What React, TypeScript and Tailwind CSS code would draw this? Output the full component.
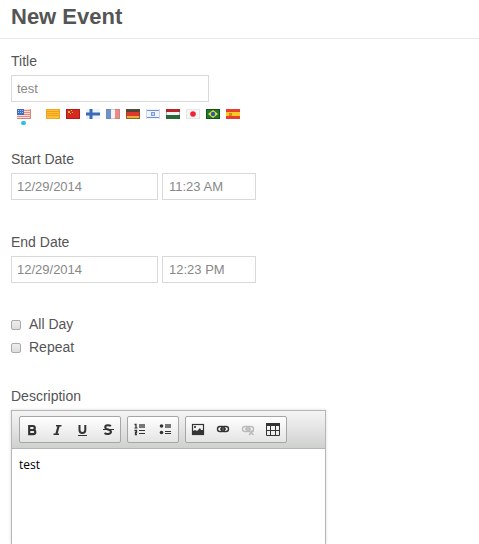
import { useState } from "react";
import type { ReactNode } from "react";

const languages: { name: string; art: ReactNode }[] = [
  {
    name: "English",
    art: (
      <>
        <rect width="14" height="10" fill="#f6dcd6" />
        <path d="M0 1.5h14M0 3.5h14M0 5.5h14M0 7.5h14" stroke="#e88a7c" />
        <rect width="7" height="6" fill="#3f6fc4" />
        <path d="M1 1.5h5M1 3.5h5" stroke="#a9c2ee" strokeDasharray="1 1" />
        <path d="M0 9.5h14M13.5 0v10" stroke="#cf8a80" />
      </>
    ),
  },
  {
    name: "Català",
    art: (
      <>
        <rect width="14" height="10" fill="#fdc02f" />
        <path d="M0 2.5h14M0 4.5h14M0 6.5h14" stroke="#f79d1e" />
        <rect x="0.5" y="0.5" width="13" height="9" fill="none" stroke="#eda52a" />
      </>
    ),
  },
  {
    name: "中文",
    art: (
      <>
        <rect width="14" height="10" fill="#d42a20" />
        <rect x="0.5" y="0.5" width="13" height="9" fill="none" stroke="#b51a16" />
        <path d="M2 2h2v2H2zM5 1h1v1H5zM6 3h1v1H6zM4 4h1v1H4z" fill="#f8b334" />
      </>
    ),
  },
  {
    name: "Suomi",
    art: (
      <>
        <rect width="14" height="10" fill="#eef2fa" />
        <path d="M0 5h14M5 0v10" stroke="#3a69b8" strokeWidth="3" />
      </>
    ),
  },
  {
    name: "Français",
    art: (
      <>
        <rect width="14" height="10" fill="#f4f4f6" />
        <rect width="5" height="10" fill="#6d92cf" />
        <rect x="9" width="5" height="10" fill="#ee8a80" />
        <rect x="0.5" y="0.5" width="13" height="9" fill="none" stroke="#777" strokeOpacity="0.3" />
      </>
    ),
  },
  {
    name: "Deutsch",
    art: (
      <>
        <rect width="14" height="4" fill="#4b4540" />
        <rect y="3" width="14" height="4" fill="#e0392c" />
        <rect y="7" width="14" height="3" fill="#e6b03a" />
        <rect x="0.5" y="0.5" width="13" height="9" fill="none" stroke="#6b4a1c" strokeOpacity="0.7" />
      </>
    ),
  },
  {
    name: "עברית",
    art: (
      <>
        <rect width="14" height="10" fill="#f1f4fb" />
        <path d="M0 1.5h14M0 8.5h14" stroke="#6c8fe0" />
        <rect x="5.5" y="3.5" width="3" height="3" fill="#c7d5f5" stroke="#7d9be4" />
        <path d="M0.5 0v10M13.5 0v10" stroke="#ccd6ec" />
      </>
    ),
  },
  {
    name: "Magyar",
    art: (
      <>
        <rect width="14" height="10" fill="#f4f4f4" />
        <rect width="14" height="3" fill="#b8232a" />
        <rect y="6" width="14" height="4" fill="#25693a" />
        <path d="M0.5 0v10M13.5 0v10" stroke="#444" strokeOpacity="0.4" />
      </>
    ),
  },
  {
    name: "日本語",
    art: (
      <>
        <rect x="0.5" y="0.5" width="13" height="9" fill="#f6f6f6" stroke="#e6e6e6" />
        <circle cx="7" cy="5" r="2.8" fill="#ee2530" />
      </>
    ),
  },
  {
    name: "Português",
    art: (
      <>
        <rect width="14" height="10" fill="#1c7a2c" />
        <rect x="0.5" y="0.5" width="13" height="9" fill="none" stroke="#17501f" />
        <path d="M7 1l5 4-5 4-5-4z" fill="#e9dc3c" />
        <circle cx="7" cy="5" r="2.2" fill="#2c5ca8" />
      </>
    ),
  },
  {
    name: "Español",
    art: (
      <>
        <rect width="14" height="10" fill="#fbc926" />
        <rect width="14" height="3" fill="#e8402c" />
        <rect y="7" width="14" height="3" fill="#e8402c" />
        <rect x="3" y="4" width="3" height="3" fill="#e0812a" />
      </>
    ),
  },
];

// Two overlapping chain links with a bar through the middle
const link = (
  <>
    <rect x="2.5" y="5.5" width="7" height="5" rx="2.5" fill="none" stroke="currentColor" strokeWidth="1.4" />
    <rect x="6.5" y="5.5" width="7" height="5" rx="2.5" fill="none" stroke="currentColor" strokeWidth="1.4" />
    <path d="M5 8h6" stroke="currentColor" strokeWidth="1.4" />
  </>
);

const toolGroups: { name: string; off?: boolean; art: ReactNode }[][] = [
  [
    {
      name: "Bold",
      art: (
        <path
          d="M5.2 5h3.6a1.8 1.8 0 0 1 0 4H5.2zM5.2 9h4a2.1 2.1 0 0 1 0 4.200H5.200z"
          fill="none"
          stroke="currentColor"
          strokeWidth="2.2"
        />
      ),
    },
    {
      name: "Italic",
      art: (
        <>
          <path d="M7 4.700h5.500M4.500 13.300H10" stroke="currentColor" strokeWidth="1.4" />
          <path d="M9.700 4.500L7.300 13.500" stroke="currentColor" strokeWidth="2.2" />
        </>
      ),
    },
    {
      name: "Underline",
      art: (
        <>
          <path d="M5.500 4v5a2.900 2.900 0 0 0 5.800 0V4" fill="none" stroke="currentColor" strokeWidth="2" />
          <path d="M4 14.500h9" stroke="currentColor" />
        </>
      ),
    },
    {
      name: "Strikethrough",
      art: (
        <>
          <path
            d="M12 5C10.500 4 6.200 3.600 6.200 6.200S12 8.300 12 10.800 7.500 13.500 5.500 12.200"
            fill="none"
            stroke="currentColor"
            strokeWidth="2"
          />
          <path d="M4 8.500h11" stroke="currentColor" />
        </>
      ),
    },
  ],
  [
    {
      name: "Numbered list",
      art: (
        <>
          <path d="M2.500 3.500H4v3.500M2.500 9.500h2v2h-1v2H5" fill="none" stroke="currentColor" strokeWidth="1.3" />
          <path d="M2.500 7h3" stroke="currentColor" />
          <rect x="7" y="3" width="6" height="4" fill="#777" />
          <path d="M7 9.500h6M7 12.500h6" stroke="currentColor" />
        </>
      ),
    },
    {
      name: "Bulleted list",
      art: (
        <>
          <circle cx="4.500" cy="5" r="1.800" fill="currentColor" />
          <circle cx="4.500" cy="11.500" r="1.800" fill="currentColor" />
          <rect x="8" y="3" width="6" height="4" fill="#777" />
          <path d="M8 10.500h6M8 12.500h6" stroke="currentColor" />
        </>
      ),
    },
  ],
  [
    {
      name: "Image",
      art: (
        <>
          <rect x="2.500" y="3.500" width="11" height="10" fill="none" stroke="currentColor" strokeWidth="1.2" />
          <path d="M3 13v-3l2-1 2 1 3-3 1 2 2 0v4z" fill="currentColor" />
          <rect x="4" y="5" width="2" height="2" fill="#555" />
        </>
      ),
    },
    { name: "Link", art: link },
    {
      name: "Unlink",
      off: true,
      art: (
        <>
          {link}
          <path d="M9 9.500l4.500 4.500M13.500 9.500L9 14" stroke="currentColor" strokeWidth="1.6" />
        </>
      ),
    },
    {
      name: "Table",
      art: (
        <>
          <rect x="1" y="2" width="14" height="3" fill="currentColor" />
          <path d="M1.500 5v9.500h13V5M1 9.500h14M5.500 5v9M10.500 5v9" fill="none" stroke="currentColor" />
        </>
      ),
    },
  ],
];

const inputClass = "block h-[27px] border border-[#d9d9d9] bg-white text-[13px] text-[#888] outline-none";

function DateTimeField({ label, id, date, time }: { label: string; id: string; date: string; time: string }) {
  return (
    <div className="flex flex-col gap-1">
      <label htmlFor={id} className="leading-5">
        {label}
      </label>
      <div className="flex gap-1">
        <input id={id} defaultValue={date} className={`${inputClass} w-[147px] px-[5px]`} />
        <input aria-label={`${label} time`} defaultValue={time} className={`${inputClass} w-[94px] px-[6px]`} />
      </div>
    </div>
  );
}

function CheckField({ label }: { label: string }) {
  return (
    <label className="flex items-center gap-2 leading-[23px]">
      <input
        type="checkbox"
        className="size-[10px] appearance-none rounded-xs border border-[#aaa] bg-linear-to-b from-[#eee] to-[#ddd] checked:bg-[#777]"
      />
      {label}
    </label>
  );
}

function Editor() {
  return (
    <div className="flex w-[315px] max-w-full flex-1 flex-col border border-b-0 border-[#b6b6b6] shadow-[0_0_3px_rgba(0,0,0,0.15)]">
      <div className="flex gap-[6px] border-b border-[#b6b6b6] bg-linear-to-b from-[#f5f5f5] to-[#cfd1cf] px-[7px] py-[5px]">
        {toolGroups.map((tools) => (
          <div key={tools[0].name} className="flex rounded-xs border border-[#a6a6a6] bg-linear-to-b from-white to-[#e4e4e4]">
            {tools.map((tool) => (
              <button
                key={tool.name}
                type="button"
                aria-label={tool.name}
                disabled={tool.off}
                className="flex h-[25px] w-[25px] items-start pt-1 pl-1 text-[#333] disabled:text-[#bbb]"
              >
                <svg viewBox="0 0 16 16" className="size-4">
                  {tool.art}
                </svg>
              </button>
            ))}
          </div>
        ))}
      </div>
      <textarea
        id="description"
        defaultValue="test"
        className="w-full flex-1 resize-none bg-white px-[7px] py-[6px] font-['Open_Sans',sans-serif] text-xs leading-5 text-black outline-none"
      />
    </div>
  );
}

export default function App() {
  const [language, setLanguage] = useState("English");

  return (
    <main className="flex min-h-screen flex-col bg-white font-['Liberation_Sans',Arial,sans-serif] text-sm text-[#555]">
      <header className="border-b border-[#e8e8e8] px-[11px] pt-[5px] pb-[9px]">
        <h1 className="text-[22px] leading-6 font-bold">New Event</h1>
      </header>

      <form className="flex flex-1 flex-col px-[11px] pt-3">
        <div className="flex flex-col gap-1">
          <label htmlFor="title" className="leading-5">
            Title
          </label>
          <input id="title" defaultValue="test" className={`${inputClass} w-[198px] px-[5px]`} />
          <div className="flex gap-[6px] px-[6px] pt-[3px]">
            {languages.map(({ name, art }) => (
              <button
                key={name}
                type="button"
                aria-label={name}
                aria-pressed={language === name}
                onClick={() => setLanguage(name)}
                className="flex h-4 w-[14px] flex-col items-start gap-[2px] first:mr-[9px]"
              >
                <svg viewBox="0 0 14 10" className="h-[10px] w-[14px] shrink-0">
                  {art}
                </svg>
                {language === name && <span className="ml-1 h-1 w-[5px] shrink-0 rounded-xs bg-[#2bbdee]" />}
              </button>
            ))}
          </div>
        </div>

        <div className="flex flex-col gap-8 pt-6">
          <DateTimeField id="start" label="Start Date" date="12/29/2014" time="11:23 AM" />
          <DateTimeField id="end" label="End Date" date="12/29/2014" time="12:23 PM" />
        </div>

        <div className="flex flex-col pt-[30px]">
          <CheckField label="All Day" />
          <CheckField label="Repeat" />
        </div>

        <label htmlFor="description" className="pt-[27px] pb-1 leading-5">
          Description
        </label>
        <Editor />
      </form>
    </main>
  );
}
